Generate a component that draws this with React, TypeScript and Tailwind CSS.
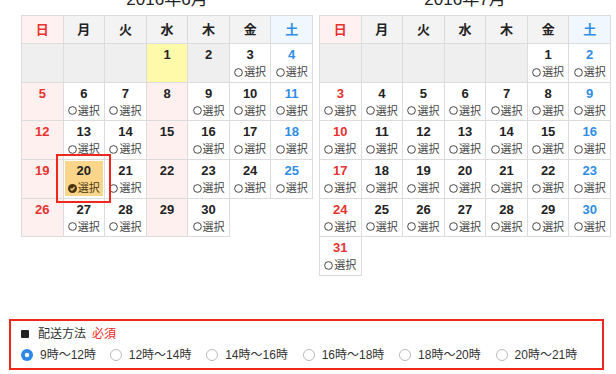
import React from "react";

type Kind = "open" | "today" | "past" | "closed" | "selected";

type Day = { d: number; kind: Kind };

const WEEK = ["日", "月", "火", "水", "木", "金", "土"];

const FONT = { fontFamily: '"Liberation Sans", "Noto Sans CJK JP", sans-serif' };

function juneKind(d: number): Kind {
  const col = (d + 2) % 7;
  if (d === 1) return "today";
  if (d === 2) return "past";
  if (d === 20) return "selected";
  if (col === 0 || col === 3) return "closed";
  return "open";
}

const june: Day[] = Array.from({ length: 30 }, (_, i) => ({ d: i + 1, kind: juneKind(i + 1) }));
const july: Day[] = Array.from({ length: 31 }, (_, i) => ({ d: i + 1, kind: "open" as Kind }));

function Circle({ checked }: { checked?: boolean }) {
  if (checked) {
    return (
      <svg width="9" height="9" viewBox="0 0 10 10" className="shrink-0">
        <circle cx="5" cy="5" r="5" fill="#4a3510" />
        <path d="M2.8 5.1 L4.4 6.6 L7.3 3.6" stroke="#fbd68a" strokeWidth="1.5" fill="none" />
      </svg>
    );
  }
  return (
    <svg width="9" height="9" viewBox="0 0 10 10" className="shrink-0">
      <circle cx="5" cy="5" r="4.3" fill="none" stroke="#444" strokeWidth="1.1" />
    </svg>
  );
}

function Cell({ day, col }: { day: Day; col: number }) {
  const bg =
    day.kind === "today"
      ? "bg-[#fffaa9]"
      : day.kind === "past"
      ? "bg-[#efefef]"
      : day.kind === "closed"
      ? "bg-[#fff0f0]"
      : "bg-white";
  const color = col === 0 ? "text-[#e8322f]" : col === 6 ? "text-[#2f8de4]" : "text-[#222]";
  const showSelect = day.kind === "open" || day.kind === "selected";

  return (
    <div className={`relative h-[38.7px] border-r border-b border-[#dcdcdc] ${bg}`}>
      {day.kind === "selected" && (
        <>
          <div className="absolute inset-x-[1px] top-[1px] bottom-[2px] bg-[#fbd68a]" />
          <div className="absolute left-[-8px] right-[-7px] top-[-6px] bottom-[-5px] border-2 border-[#f0281c] z-10" />
        </>
      )}
      <div className="relative flex flex-col items-center pt-[3px]">
        <span className={`text-[13px] font-bold leading-[15px] ${color}`}>{day.d}</span>
        {showSelect && (
          <span
            className={`mt-[3px] flex items-center gap-[1px] text-[11px] leading-[14px] ${
              day.kind === "selected" ? "text-[#4a3510]" : "text-[#444]"
            }`}
          >
            <Circle checked={day.kind === "selected"} />
            選択
          </span>
        )}
      </div>
    </div>
  );
}

function MonthTable({ title, lead, days }: { title: string; lead: number; days: Day[] }) {
  return (
    <div className="w-[292px]">
      <div className="mt-[-12px] mb-[3px] h-[24px] text-center text-[17px] leading-[24px] text-[#222]">{title}</div>
      <div className="grid grid-cols-7 border-l border-t border-[#dcdcdc]">
        {WEEK.map((w, i) => (
          <div
            key={w}
            className={`flex h-[28px] items-center justify-center border-r border-b border-[#dcdcdc] text-[13px] font-bold ${
              i === 0
                ? "bg-[#fff1f1] text-[#e8322f]"
                : i === 6
                ? "bg-[#f1f7fe] text-[#2f8de4]"
                : "bg-[#f3f3f3] text-[#222]"
            }`}
          >
            {w}
          </div>
        ))}
        {Array.from({ length: lead }, (_, i) => (
          <div key={"e" + i} className="h-[38.7px] border-r border-b border-[#dcdcdc] bg-[#efefef]" />
        ))}
        {days.map((day, i) => (
          <Cell key={day.d} day={day} col={(i + lead) % 7} />
        ))}
      </div>
    </div>
  );
}

const SLOTS = ["9時〜12時", "12時〜14時", "14時〜16時", "16時〜18時", "18時〜20時", "20時〜21時"];

function Radio({ checked }: { checked?: boolean }) {
  if (checked) {
    return (
      <svg width="12" height="12" viewBox="0 0 12 12" className="shrink-0">
        <circle cx="6" cy="6" r="6" fill="#2f87e6" />
        <circle cx="6" cy="6" r="2.2" fill="#fff" />
      </svg>
    );
  }
  return (
    <svg width="12" height="12" viewBox="0 0 12 12" className="shrink-0">
      <circle cx="6" cy="6" r="5.5" fill="#fff" stroke="#b9b9b9" strokeWidth="1" />
    </svg>
  );
}

export default function App() {
  return (
    <div className="h-[374px] w-[616px] overflow-hidden bg-white" style={FONT}>
      <div className="flex gap-[6px] pl-[21px]">
        <MonthTable title="2016年6月" lead={3} days={june} />
        <MonthTable title="2016年7月" lead={5} days={july} />
      </div>

      {/* 配送方法 */}
      <div className="ml-[9px] mt-[43px] w-[595px] border-2 border-[#f0281c] px-[10px] pt-[5px] pb-[5px]">
        <div className="flex h-[16px] items-center text-[12px] text-[#333]">
          <span className="mr-[9px] h-[8px] w-[8px] rounded-[1px] bg-[#222]" />
          配送方法
          <span className="ml-[6px] text-[#f0281c]">必須</span>
        </div>
        <div className="mt-[5px] flex h-[16px] items-center text-[12px] text-[#333]">
          {SLOTS.map((s, i) => (
            <label key={s} className={`flex items-center gap-[7px] ${i === 0 ? "w-[92px]" : "w-[100px]"}`}>
              <Radio checked={i === 0} />
              {s}
            </label>
          ))}
        </div>
      </div>
    </div>
  );
}
